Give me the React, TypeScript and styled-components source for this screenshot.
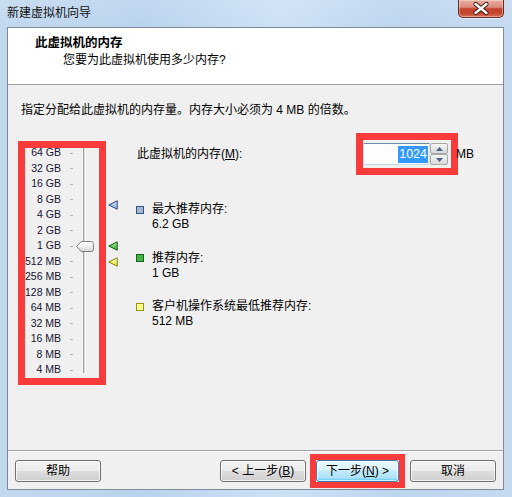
import React from "react";
import styled, { createGlobalStyle } from "styled-components";

const GlobalStyle = createGlobalStyle`
  html, body { margin: 0; padding: 0; background: #c4daf0; }
  body {
    font-family: "Liberation Sans", "Noto Sans CJK SC", sans-serif;
    font-size: 12px;
    color: #000;
  }
  * { box-sizing: border-box; }
`;

const Window = styled.div`
  width: 512px;
  height: 497px;
  display: flex;
  flex-direction: column;
  overflow: hidden;
  background:
    linear-gradient(180deg, rgba(255, 255, 255, 0.12) 0%, rgba(255, 255, 255, 0) 30px),
    linear-gradient(90deg, #c2d8ee 0%, #b9d3ee 28%, #cde1f5 55%, #bcd5ee 78%, #c5daf0 100%);
`;

const TitleBar = styled.div`
  flex: none;
  height: 27px;
  display: flex;
  align-items: flex-start;
  justify-content: space-between;
  padding: 0 8px 0 7px;
`;

const TitleText = styled.div`
  line-height: 26px;
  font-size: 12px;
  color: #111;
`;

const CloseButton = styled.div`
  width: 46px;
  height: 18px;
  border: 1px solid #6b2a20;
  border-top: none;
  border-radius: 0 0 5px 5px;
  background: linear-gradient(180deg, #eaae9f 0%, #dc8c7c 42%, #c4432f 52%, #c44530 78%, #d9735c 100%);
  box-shadow: inset 0 0 0 1px rgba(255, 255, 255, 0.35), 0 1px 0 rgba(255, 255, 255, 0.6);
  display: flex;
`;

const Client = styled.div`
  flex: 1;
  margin: 0 8px 7px 7px;
  border: 1px solid #7d8a99;
  background: #f0f0f0;
  display: flex;
  flex-direction: column;
`;

const Header = styled.div`
  flex: none;
  height: 57px;
  background: #fff;
  border-bottom: 1px solid #a0a0a0;
  padding: 7px 0 0 27px;
`;

const HeaderTitle = styled.div`
  font-weight: bold;
  line-height: 16px;
  font-size: 12.5px;
`;

const HeaderSub = styled.div`
  margin: 1px 0 0 28px;
  line-height: 16px;
`;

const Body = styled.div`
  flex: 1;
  padding: 17px 0 0 10px;
  display: flex;
  flex-direction: column;
`;

const Description = styled.div`
  margin-left: 3px;
  line-height: 16px;
  white-space: nowrap;
`;

const MainRow = styled.div`
  margin-top: 23px;
  display: flex;
  align-items: flex-start;
`;

const SliderFrame = styled.div`
  position: relative;
  width: 88px;
  height: 244px;
  border: 7px solid #f93b3b;
  background: #f0f0f0;
  display: flex;
  align-items: flex-start;
`;

const Scale = styled.div`
  margin-top: -2.75px;
  display: flex;
  flex-direction: column;
`;

const ScaleRow = styled.div`
  height: 15.5px;
  display: flex;
  align-items: center;
`;

const ScaleLabel = styled.span`
  width: 36px;
  text-align: right;
  white-space: nowrap;
  font-size: 10.5px;
  line-height: 15.5px;
  color: #141430;
`;

const Tick = styled.span`
  margin-left: 9px;
  width: 3px;
  height: 1px;
  background: #b4b4b4;
`;

const Track = styled.div`
  margin-left: 10px;
  width: 3px;
  height: 225px;
  border-left: 1px solid #a8a8a8;
  border-right: 1px solid #ffffff;
  background: #d6d6d6;
`;

const Thumb = styled.svg`
  position: absolute;
  left: 51px;
  width: 18px;
  height: 11px;
`;

const Markers = styled.div`
  position: relative;
  width: 31px;
  height: 244px;
  flex: none;
`;

const Marker = styled.svg`
  position: absolute;
  left: 2px;
  width: 10px;
  height: 10px;
`;

const RightPane = styled.div`
  margin-top: -8px;
  display: flex;
  flex-direction: column;
`;

const MemoryRow = styled.div`
  height: 42px;
  display: flex;
  align-items: center;
`;

const MemoryLabel = styled.span`
  width: 219px;
  line-height: 16px;
`;

const U = styled.span`
  text-decoration: underline;
`;

const SpinHighlight = styled.div`
  border: 7px solid #f93b3b;
  padding: 3px 3px 3px 0;
  display: flex;
`;

const SpinInput = styled.div`
  width: 67px;
  height: 22px;
  background: #fff;
  border: 1px solid;
  border-color: #6d88a8 #dfe3e8 #c6d6e6 #dfe3e8;
  display: flex;
  align-items: center;
  justify-content: flex-end;
  padding-right: 1px;
`;

const Selected = styled.span`
  background: #3399ff;
  color: #fff;
  font-size: 12.5px;
  line-height: 17px;
  padding: 0 1px;
`;

const SpinButtons = styled.div`
  width: 18px;
  height: 22px;
  display: flex;
  flex-direction: column;
`;

const SpinButton = styled.div`
  height: 11px;
  border: 1px solid #a9a9a9;
  border-radius: 2px;
  background: linear-gradient(180deg, #f6f6f6 0%, #e6e6e6 55%, #d8d8d8 100%);
  display: flex;
  align-items: center;
  justify-content: center;
`;

const Unit = styled.span`
  margin-left: -2px;
  line-height: 16px;
`;

const Legend = styled.div`
  margin: 27px 0 0 -1px;
  display: flex;
  flex-direction: column;
  gap: 18.5px;
`;

const LegendItem = styled.div`
  display: flex;
  align-items: flex-start;
`;

const Swatch = styled.span<{ $fill: string; $edge: string }>`
  flex: none;
  width: 8px;
  height: 8px;
  margin-top: 3.5px;
  border: 1px solid ${(p) => p.$edge};
  background: ${(p) => p.$fill};
`;

const LegendText = styled.div`
  margin-left: 8px;
  line-height: 15px;
`;

const Footer = styled.div`
  flex: none;
  height: 39px;
  border-top: 1px solid #a0a0a0;
  box-shadow: inset 0 1px 0 #ffffff;
  padding: 9px 7px 0 7px;
  display: flex;
  align-items: flex-start;
`;

const Spacer = styled.div`
  flex: 1;
`;

const Button = styled.button<{ $primary?: boolean; $w?: number }>`
  width: ${(p) => p.$w ?? 86}px;
  height: 22px;
  padding: 0;
  border: 1px solid ${(p) => (p.$primary ? "#3c7fb1" : "#707070")};
  border-radius: 3px;
  font-family: inherit;
  font-size: 12px;
  color: #000;
  line-height: 18px;
  background: ${(p) =>
    p.$primary
      ? "linear-gradient(180deg, #ecf9fe 0%, #d9f3fd 45%, #c0eafb 52%, #aee2f8 85%, #40c6ee 100%)"
      : "linear-gradient(180deg, #f2f2f2 0%, #ebebeb 48%, #dddddd 52%, #cfcfcf 100%)"};
  box-shadow: inset 0 0 0 1px rgba(255, 255, 255, 0.75);
`;

const NextHighlight = styled.div`
  margin: -6px 0 0 4px;
  border: 6px solid #f93b3b;
  display: flex;
`;

const CancelWrap = styled.div`
  margin-left: 5px;
  display: flex;
`;

const labels = [
  "64 GB", "32 GB", "16 GB", "8 GB", "4 GB", "2 GB", "1 GB",
  "512 MB", "256 MB", "128 MB", "64 MB", "32 MB", "16 MB", "8 MB", "4 MB",
];

const indexFor = (mb: number) => 16 - Math.log2(mb);

const markers = [
  { mb: 6348.8, fill: "#8fb0dc", light: "#d4e2f4", edge: "#27467a" },
  { mb: 1024, fill: "#3cb43c", light: "#a8e6a0", edge: "#0f5d12" },
  { mb: 512, fill: "#e6e63a", light: "#ffffb8", edge: "#7e7e10" },
];

const legend = [
  { label: "最大推荐内存:", value: "6.2 GB", fill: "#a3b8d6", edge: "#34527e" },
  { label: "推荐内存:", value: "1 GB", fill: "#44b444", edge: "#1a5f1a" },
  { label: "客户机操作系统最低推荐内存:", value: "512 MB", fill: "#ffff8a", edge: "#8f8f22" },
];

export default function App() {
  const memory = 1024;
  const thumbTop = 5 + 15.5 * indexFor(memory) - 5.5;
  return (
    <>
      <GlobalStyle />
      <Window>
        <TitleBar>
          <TitleText>新建虚拟机向导</TitleText>
          <CloseButton>
            <svg width="44" height="17" viewBox="0 0 44 17">
              <path d="M16.5 4 L27.5 13 M27.5 4 L16.5 13" stroke="#3b1410" strokeWidth="4.2" strokeLinecap="round" />
              <path d="M16.5 4 L27.5 13 M27.5 4 L16.5 13" stroke="#ffffff" strokeWidth="2.4" strokeLinecap="round" />
            </svg>
          </CloseButton>
        </TitleBar>
        <Client>
          <Header>
            <HeaderTitle>此虚拟机的内存</HeaderTitle>
            <HeaderSub>您要为此虚拟机使用多少内存?</HeaderSub>
          </Header>
          <Body>
            <Description>指定分配给此虚拟机的内存量。内存大小必须为 4 MB 的倍数。</Description>
            <MainRow>
              <SliderFrame>
                <Scale>
                  {labels.map((l) => (
                    <ScaleRow key={l}>
                      <ScaleLabel>{l}</ScaleLabel>
                      <Tick />
                    </ScaleRow>
                  ))}
                </Scale>
                <Track />
                <Thumb viewBox="0 0 18 11" style={{ top: thumbTop }}>
                  <defs>
                    <linearGradient id="thumbg" x1="0" y1="0" x2="0" y2="1">
                      <stop offset="0" stopColor="#ffffff" />
                      <stop offset="0.5" stopColor="#f0f0f0" />
                      <stop offset="1" stopColor="#d4d4d4" />
                    </linearGradient>
                  </defs>
                  <path
                    d="M0.6 5.5 L5.2 0.5 H15.2 Q17.4 0.5 17.4 2.7 V8.3 Q17.4 10.5 15.2 10.5 H5.2 Z"
                    fill="url(#thumbg)"
                    stroke="#7e7e7e"
                    strokeWidth="1"
                  />
                </Thumb>
              </SliderFrame>
              <Markers>
                {markers.map((m, i) => (
                  <Marker
                    key={i}
                    viewBox="0 0 10 10"
                    style={{ top: 12 + 15.5 * indexFor(m.mb) - 5 }}
                  >
                    <defs>
                      <linearGradient id={`mk${i}`} x1="0" y1="0" x2="0" y2="1">
                        <stop offset="0" stopColor={m.light} />
                        <stop offset="1" stopColor={m.fill} />
                      </linearGradient>
                    </defs>
                    <path d="M0.8 5 L9.2 0.8 V9.2 Z" fill={`url(#mk${i})`} stroke={m.edge} strokeWidth="1" strokeLinejoin="round" />
                  </Marker>
                ))}
              </Markers>
              <RightPane>
                <MemoryRow>
                  <MemoryLabel>
                    此虚拟机的内存(<U>M</U>):
                  </MemoryLabel>
                  <SpinHighlight>
                    <SpinInput>
                      <Selected>1024</Selected>
                    </SpinInput>
                    <SpinButtons>
                      <SpinButton>
                        <svg width="7" height="4" viewBox="0 0 7 4">
                          <path d="M0 4 L3.5 0 L7 4 Z" fill="#4d6185" />
                        </svg>
                      </SpinButton>
                      <SpinButton>
                        <svg width="7" height="4" viewBox="0 0 7 4">
                          <path d="M0 0 L3.5 4 L7 0 Z" fill="#4d6185" />
                        </svg>
                      </SpinButton>
                    </SpinButtons>
                  </SpinHighlight>
                  <Unit>MB</Unit>
                </MemoryRow>
                <Legend>
                  {legend.map((l) => (
                    <LegendItem key={l.label}>
                      <Swatch $fill={l.fill} $edge={l.edge} />
                      <LegendText>
                        <div>{l.label}</div>
                        <div>{l.value}</div>
                      </LegendText>
                    </LegendItem>
                  ))}
                </Legend>
              </RightPane>
            </MainRow>
          </Body>
          <Footer>
            <Button>帮助</Button>
            <Spacer />
            <Button>
              &lt; 上一步(<U>B</U>)
            </Button>
            <NextHighlight>
              <Button $primary $w={83}>
                下一步(<U>N</U>) &gt;
              </Button>
            </NextHighlight>
            <CancelWrap>
              <Button>取消</Button>
            </CancelWrap>
          </Footer>
        </Client>
      </Window>
    </>
  );
}
